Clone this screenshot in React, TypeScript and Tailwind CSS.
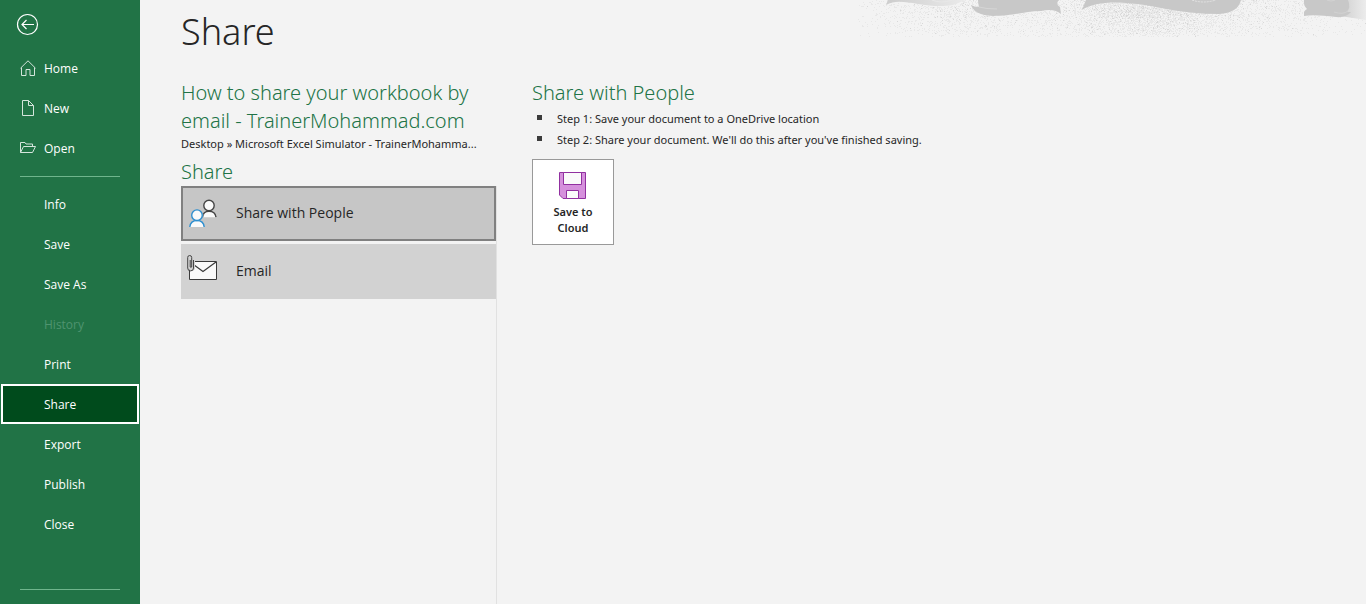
import React from "react";

type NavItem = { label: string; disabled?: boolean; active?: boolean };

const items: NavItem[] = [
  { label: "Info" },
  { label: "Save" },
  { label: "Save As" },
  { label: "History", disabled: true },
  { label: "Print" },
  { label: "Share", active: true },
  { label: "Export" },
  { label: "Publish" },
  { label: "Close" },
];

const HomeIcon = () => (
  <svg width="16" height="16" viewBox="0 0 16 16" fill="none" stroke="#d5e5dc" strokeWidth="1" aria-hidden="true">
    <path d="M.5 8.2 8 .8l7.500 7.400M1.500 7.500v8h4.500v-6h4v6h4.500v-8" />
  </svg>
);

const NewIcon = () => (
  <svg width="16" height="16" viewBox="0 0 16 16" fill="none" stroke="#d5e5dc" strokeWidth="1" aria-hidden="true">
    <path d="M2.500.5h6l5 5v10h-11zM8.500.5v5h5" />
  </svg>
);

const OpenIcon = () => (
  <svg width="16" height="16" viewBox="0 0 16 16" fill="none" stroke="#d5e5dc" strokeWidth="1" aria-hidden="true">
    <path d="M.5 12.500v-10h4.500l1 1.500h6.500v2.500M.5 12.500l3-6h12l-3 6z" />
  </svg>
);

const top = [
  { label: "Home", Icon: HomeIcon },
  { label: "New", Icon: NewIcon },
  { label: "Open", Icon: OpenIcon },
];

function PeopleIcon() {
  return (
    <svg width="28" height="29" viewBox="0 0 28 29" fill="#fafafa" strokeWidth="1.400" aria-hidden="true">
      <path d="M13.500 18.200c.4-4 3-6 6.500-6s6.500 2 7 6" stroke="#444" />
      <circle cx="20" cy="6.500" r="5.200" stroke="#444" />
      <path d="M13 18.900h-1.500v-4h3z" fill="#c6c6c6" />
      <path d="M.8 28c.5-4.500 3.500-6.500 7.200-6.500s6.700 2 7.200 6.500" stroke="#2e8fd0" />
      <circle cx="8" cy="16.200" r="5.300" stroke="#2e8fd0" />
    </svg>
  );
}

function EmailIcon() {
  return (
    <svg width="31" height="26" viewBox="0 0 31 26" fill="none" aria-hidden="true">
      <path d="M2.500 6.500h27v18h-27z" fill="#fafafa" stroke="#3a3a3a" />
      <path d="M3 7l13 9.500L29 7" stroke="#3a3a3a" strokeWidth="1.200" />
      <path d="M1 1h7v13l-2 2H3L1 12z" fill="#d2d2d2" />
      <path d="M6.500 5v8a2.900 2.900 0 0 1-5.800 0v-10.500a2 2 0 0 1 4 0v9.500a1 1 0 0 1-1.500 0V5" stroke="#444" />
    </svg>
  );
}

function DiskIcon() {
  return (
    <svg width="28" height="27" viewBox="0 0 28 27" stroke="#9130a0" aria-hidden="true">
      <path d="M.5.5h26v26H4L.5 23z" fill="#d590dc" />
      <path d="M4.500.5h18v12h-18zM7.500 18.500h12v8h-12z" fill="#fafafa" />
    </svg>
  );
}

/* Deterministic grain for the header decoration. */
function makeGrain() {
  let s = 9173;
  const rnd = () => {
    s = (s * 16807) % 2147483647;
    return s / 2147483647;
  };
  let light = "";
  let dark = "";
  for (let y = 0; y < 37; y++) {
    for (let x = 18; x < 526; x++) {
      const band = Math.exp(-(((x - 310) / 75) ** 2));
      const left = 0.35 * Math.exp(-(((x - 130) / 80) ** 2));
      const right = 0.18 * Math.exp(-(((x - 450) / 70) ** 2));
      const fade = 1 - Math.max(0, y - 12) / 36;
      const density = (band * 0.8 + left + right) * fade;
      const r = rnd();
      if (r < density * density * 0.25) dark += `M${x} ${y}h1v1h-1z`;
      else if (r < density) light += `M${x} ${y}h1v1h-1z`;
    }
  }
  return { light, dark };
}
const grain = makeGrain();

function HeaderArt() {
  return (
    <svg className="pointer-events-none absolute top-0 right-0" width="526" height="40" viewBox="0 0 526 40" aria-hidden="true">
      <defs>
        <linearGradient id="leftRibbon" x1="0" x2="1">
          <stop offset="0" stopColor="#cdcdcd" />
          <stop offset="1" stopColor="#ebebeb" />
        </linearGradient>
        <linearGradient id="edge" x1="0" x2="1">
          <stop offset="0" stopColor="#cecece" />
          <stop offset="1" stopColor="#ececec" />
        </linearGradient>
      </defs>
      <path d={grain.light} fill="#e8e8e8" />
      <path d={grain.dark} fill="#d8d8d8" />
      <path d="M48 0 46 5C55 0 65 2 78 4s23 3 35 1l13-5z" fill="url(#leftRibbon)" />
      <path d="M92 0q9 4 20 0" fill="none" stroke="#e8e8e8" />
      <path d="M138 0h81q-4 4 1 7l1 7q-7-6-20-3c-17 0-27 5-48 5q-19-1-22-11 3 2 8 2-1-4-1-7z" fill="#c8c8c8" />
      <path d="M139 7q7 2 18 2" fill="none" stroke="#d6d6d6" />
      <path d="M246 0h155q-3 13-22 14-28 0-58-6c-31-6-62-9-79 2z" fill="#c8c8c8" />
      <path d="M352 0q11 4 24 0" fill="none" stroke="#e4e4e4" strokeDasharray="2 1" />
      <path d="M500 0h26v20l-26-4z" fill="url(#edge)" />
      <path d="M464 0h44q3 7-1 12h4q-5 6-15 5-22-3-32-1v-4q1-2 3-3-4-4-3-9z" fill="#c8c8c8" />
      <path d="M494 12q9 3 14-1M487 0q4 2 8 0" fill="none" stroke="#d2d2d2" />
    </svg>
  );
}

export default function App() {
  return (
    <div className="flex min-h-screen bg-[#f3f3f3] font-['Noto_Sans','Open_Sans',sans-serif] text-[11px] text-[#262626]">
      <nav aria-label="File" className="flex w-[140px] shrink-0 flex-col bg-[#217346] font-['Open_Sans','Noto_Sans',sans-serif] text-[12px] text-white">
        <div className="flex h-12 items-center pl-4">
          <button aria-label="Back" className="size-6">
            <svg width="24" height="24" viewBox="0 0 24 24" fill="none" stroke="white" strokeWidth="1.200" aria-hidden="true">
              <circle cx="11.500" cy="12.500" r="10" />
              <path d="M18 12.500H6M10.500 8 6 12.500l4.500 4.500" />
            </svg>
          </button>
        </div>
        {top.map(({ label, Icon }) => (
          <button key={label} className="flex h-10 items-center gap-2 pl-5 text-left">
            <Icon />
            <span className="pt-0.5">{label}</span>
          </button>
        ))}
        <hr className="mx-5 mt-2 mb-[7px] border-[#6fb58c]" />
        {items.map(({ label, disabled, active }) => (
          <button
            key={label}
            disabled={disabled}
            aria-current={active ? "page" : undefined}
            className={
              active
                ? "mx-px h-10 border-2 border-white bg-[#004b1c] pt-0.5 pl-[41px] text-left"
                : "h-10 pt-0.5 pl-11 text-left disabled:text-[#4f9470]"
            }
          >
            {label}
          </button>
        ))}
        <hr className="mx-5 mt-auto mb-[14px] border-[#6fb58c]" />
      </nav>

      <main className="relative flex min-w-0 flex-1 flex-col pl-[41px]">
        <HeaderArt />
        <h1 className="pt-2 text-[36px] leading-[48px] font-light">Share</h1>
        <div className="mt-[23px] flex flex-1">
          <section className="flex w-[316px] shrink-0 flex-col">
            <h2 className="text-[20px] leading-7 font-light text-[#217346]">
              How to share your workbook by email - TrainerMohammad.com
            </h2>
            <p className="leading-[18px] whitespace-nowrap">
              Desktop » Microsoft Excel Simulator - TrainerMohamma...
            </p>
            <h2 className="pt-1 text-[20px] leading-[29px] font-light text-[#217346]">Share</h2>
            <div className="flex flex-1 flex-col gap-[3px] border-r border-[#e1e1e1] font-['Open_Sans','Noto_Sans',sans-serif] text-[14px]">
              <button className="flex h-[55px] items-center border-2 border-[#808080] bg-[#c6c6c6] pl-1.5 text-left">
                <span className="w-[47px]"><PeopleIcon /></span>
                <span className="pb-0.5">Share with People</span>
              </button>
              <button className="flex h-[55px] items-center bg-[#d2d2d2] pl-1.5 text-left">
                <span className="w-[49px] pb-2"><EmailIcon /></span>
                <span className="pb-0.5">Email</span>
              </button>
            </div>
          </section>
          <section className="ml-[35px]">
            <h2 className="text-[20px] leading-7 font-light text-[#217346]">Share with People</h2>
            <ul className="pt-px leading-[21px]">
              {[
                "Step 1: Save your document to a OneDrive location",
                "Step 2: Share your document. We'll do this after you've finished saving.",
              ].map((step) => (
                <li key={step} className="flex items-center gap-[15px] pl-[5px]">
                  <span className="mb-0.5 size-[5px] bg-[#3b3b3b]" />
                  {step}
                </li>
              ))}
            </ul>
            <button className="mt-[9px] flex h-[86px] w-[82px] flex-col items-center border border-[#999] bg-white px-4 pt-3 leading-4 font-semibold">
              <DiskIcon />
              <span className="mt-[5px]">Save to Cloud</span>
            </button>
          </section>
        </div>
      </main>
    </div>
  );
}
